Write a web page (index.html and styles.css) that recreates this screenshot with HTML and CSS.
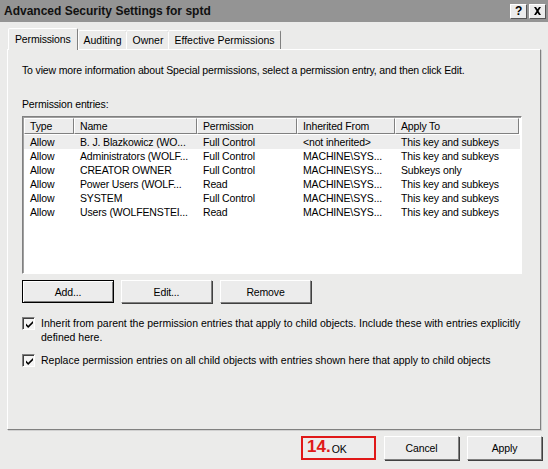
FILE: index.html
```html
<!DOCTYPE html>
<html>
<head>
<meta charset="utf-8">
<link rel="stylesheet" href="styles.css">
</head>
<body>
<div class="window">
  <div class="titlebar">
    <span class="title">Advanced Security Settings for sptd</span>
    <div class="capbtns">
      <span class="capbtn">?</span>
      <span class="capbtn">
        <svg width="9" height="8" viewBox="0 0 9 8"><path d="M1 0h2l1.5 2.2L6 0h2L5.5 4 8 8H6L4.5 5.8 3 8H1l2.5-4z" fill="#000"/></svg>
      </span>
    </div>
  </div>
  <div class="body">
    <div class="tabs">
      <span class="tab active">Permissions</span>
      <span class="tab">Auditing</span>
      <span class="tab">Owner</span>
      <span class="tab">Effective Permissions</span>
    </div>
    <div class="panel">
      <p class="intro">To view more information about Special permissions, select a permission entry, and then click Edit.</p>
      <p class="label">Permission entries:</p>
      <div class="list">
        <div class="row head">
          <span class="c1">Type</span><span class="c2">Name</span><span class="c3">Permission</span><span class="c4">Inherited From</span><span class="c5">Apply To</span>
        </div>
        <div class="row sel">
          <span class="c1">Allow</span><span class="c2">B. J. Blazkowicz (WO...</span><span class="c3">Full Control</span><span class="c4">&lt;not inherited&gt;</span><span class="c5">This key and subkeys</span>
        </div>
        <div class="row">
          <span class="c1">Allow</span><span class="c2">Administrators (WOLF...</span><span class="c3">Full Control</span><span class="c4">MACHINE\SYS...</span><span class="c5">This key and subkeys</span>
        </div>
        <div class="row">
          <span class="c1">Allow</span><span class="c2">CREATOR OWNER</span><span class="c3">Full Control</span><span class="c4">MACHINE\SYS...</span><span class="c5">Subkeys only</span>
        </div>
        <div class="row">
          <span class="c1">Allow</span><span class="c2">Power Users (WOLF...</span><span class="c3">Read</span><span class="c4">MACHINE\SYS...</span><span class="c5">This key and subkeys</span>
        </div>
        <div class="row">
          <span class="c1">Allow</span><span class="c2">SYSTEM</span><span class="c3">Full Control</span><span class="c4">MACHINE\SYS...</span><span class="c5">This key and subkeys</span>
        </div>
        <div class="row">
          <span class="c1">Allow</span><span class="c2">Users (WOLFENSTEI...</span><span class="c3">Read</span><span class="c4">MACHINE\SYS...</span><span class="c5">This key and subkeys</span>
        </div>
      </div>
      <div class="btnrow">
        <span class="btn default">Add...</span>
        <span class="btn">Edit...</span>
        <span class="btn">Remove</span>
      </div>
      <div class="check first">
        <span class="box"><svg width="9" height="9" viewBox="0 0 9 9"><path d="M1 3.5l2.2 2.2L8 1v2.3L3.2 8 1 5.8z" fill="#000"/></svg></span>
        <span class="ctext">Inherit from parent the permission entries that apply to child objects. Include these with entries explicitly defined here.</span>
      </div>
      <div class="check">
        <span class="box"><svg width="9" height="9" viewBox="0 0 9 9"><path d="M1 3.5l2.2 2.2L8 1v2.3L3.2 8 1 5.8z" fill="#000"/></svg></span>
        <span class="ctext">Replace permission entries on all child objects with entries shown here that apply to child objects</span>
      </div>
    </div>
    <div class="footer">
      <span class="btn wide ok"><span class="num">14.</span>OK</span>
      <span class="btn wide">Cancel</span>
      <span class="btn wide">Apply</span>
    </div>
  </div>
</div>
</body>
</html>
```
FILE: styles.css
```css
* { box-sizing: border-box; }
html, body { margin: 0; padding: 0; }
body {
  background: #ebebea;
  font-family: "Liberation Sans", Arial, sans-serif;
  font-size: 10.5px;
  letter-spacing: -0.15px;
  color: #000;
}
.window {
  width: 548px;
  height: 469px;
  background: #ebebea;
  overflow: hidden;
}
.titlebar {
  height: 22px;
  background: #949494;
  display: flex;
  align-items: center;
  justify-content: space-between;
  padding: 0 2px 0 4px;
}
.title {
  font-weight: bold;
  font-size: 12px;
  color: #111;
  letter-spacing: 0;
}
.capbtns { display: flex; gap: 2px; }
.capbtn {
  width: 17px;
  height: 15px;
  background: #ececec;
  border: 1px solid;
  border-color: #fff #555 #555 #fff;
  display: flex;
  align-items: center;
  justify-content: center;
  font-weight: bold;
  font-size: 12px;
  line-height: 1;
}
.body { padding: 6px 0 0 7px; }
.tabs {
  display: flex;
  align-items: flex-end;
  height: 21px;
  padding-left: 1px;
}
.tab {
  height: 19px;
  padding: 3px 5px 0;
  border: 1px solid;
  border-bottom: none;
  border-color: #fff #808080 transparent #fff;
  border-radius: 2px 2px 0 0;
  margin-left: -1px;
  white-space: nowrap;
  letter-spacing: 0;
}
.tab.active {
  height: 22px;
  padding: 4px 6px 0;
  margin: 0 1px -1px 0;
  position: relative;
  background: #ebebea;
  z-index: 1;
  letter-spacing: -0.15px;
}
.panel {
  width: 534px;
  height: 381px;
  border: 1px solid;
  border-color: #fff #808080 #808080 #fff;
  box-shadow: 1px 1px 0 #d0d0d0;
  padding: 14px 0 0 14px;
}
.intro { margin: 0; line-height: 13px; }
.label { margin: 21px 0 0; line-height: 13px; }
.list {
  margin-top: 5px;
  width: 500px;
  height: 158px;
  background: #fff;
  border: 1px solid;
  border-color: #808080 #fff #fff #808080;
  box-shadow: inset 1px 1px 0 #a0a0a0;
  padding: 1px 0 0 1px;
}
.row {
  display: flex;
  height: 14px;
  line-height: 14px;
  white-space: nowrap;
}
.row span { overflow: hidden; padding-left: 6px; }
.row.sel { background: #ededed; margin-right: 1px; }
.row.head { height: 16px; line-height: 15px; margin-right: 1px; margin-bottom: 1px; }
.row.head span {
  background: #ececec;
  border: 1px solid;
  border-color: #fff #808080 #808080 #fff;
  padding-left: 5px;
}
.c1 { width: 50px; }
.c2 { width: 123px; }
.c3 { width: 100px; }
.c4 { width: 98px; }
.c5 { width: 124px; }
.btn {
  display: flex;
  align-items: center;
  justify-content: center;
  height: 23px;
  background: #ececec;
  border: 1px solid;
  border-color: #fff #808080 #808080 #fff;
  box-shadow: 1px 1px 0 #404040;
}
.btnrow {
  display: flex;
  gap: 8px;
  margin-top: 6px;
}
.btnrow .btn { width: 91px; }
.btnrow .btn.default {
  border: 1px solid #000;
  box-shadow: inset 1px 1px 0 #fff, inset -1px -1px 0 #808080;
  width: 92px;
  margin-right: -1px;
}
.check {
  display: flex;
  align-items: flex-start;
  gap: 6px;
  margin-top: 13px;
  padding-right: 18px;
}
.check + .check { margin-top: 9px; }
.box {
  flex: none;
  width: 13px;
  height: 13px;
  margin-top: 1px;
  background: #f4f4f4;
  border: 1px solid;
  border-color: #808080 #fff #fff #808080;
  box-shadow: inset 1px 1px 0 #404040;
  display: flex;
  align-items: center;
  justify-content: center;
  padding: 1px 0 0 1px;
}
.ctext { line-height: 14px; letter-spacing: 0; }
.footer {
  display: flex;
  justify-content: flex-end;
  gap: 8px;
  padding: 6px 6px 0 0;
}
.btn.wide { width: 75px; height: 24px; }
.btn.ok {
  border: 2px solid #e01818;
  box-shadow: none;
  justify-content: flex-start;
  padding-left: 4px;
  align-items: flex-end;
  padding-bottom: 3px;
}
.num {
  color: #e01818;
  font-weight: bold;
  font-size: 17px;
  line-height: 17px;
  margin-right: 1px;
  letter-spacing: 0;
}
```
